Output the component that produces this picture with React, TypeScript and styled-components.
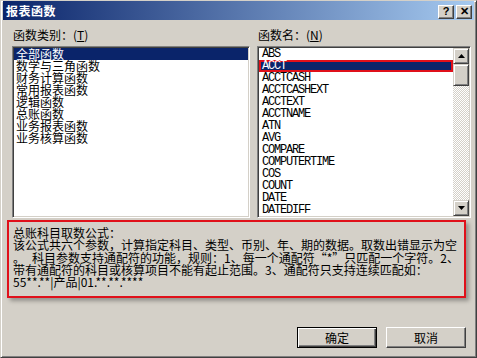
import React from "react";
import styled, { createGlobalStyle } from "styled-components";

const GlobalStyle = createGlobalStyle`
  html, body { margin: 0; padding: 0; background: #d4d0c8; }
  body { font-family: "Noto Sans CJK SC", "Liberation Sans", sans-serif; font-size: 12px; color: #000; }
  * { box-sizing: border-box; }
`;

const Window = styled.div`
  width: 477px;
  height: 358px;
  background: #d4d0c8;
  border: 1px solid;
  border-color: #d4d0c8 #404040 #404040 #d4d0c8;
  box-shadow: inset 1px 1px #ffffff, inset -1px -1px #808080;
  padding: 0 2px 2px 2px;
  display: flex;
  flex-direction: column;
`;

const TitleBar = styled.div`
  height: 19px;
  display: flex;
  align-items: center;
  padding: 0 2px 0 2px;
  background: linear-gradient(to right, #0a246a, #a6caf0);
`;

const TitleText = styled.div`
  flex: 1;
  color: #fff;
  font-weight: 700;
  font-size: 12px;
  line-height: 12px;
  padding-left: 1px;
  letter-spacing: 0.5px;
`;

const CaptionButtons = styled.div`
  display: flex;
  gap: 2px;
  margin-top: 2px;
`;

const CaptionButton = styled.div`
  width: 16px;
  height: 14px;
  background: #d4d0c8;
  border: 1px solid;
  border-color: #ffffff #404040 #404040 #ffffff;
  box-shadow: inset -1px -1px #808080;
  display: flex;
  align-items: center;
  justify-content: center;
  font-family: "Liberation Sans", sans-serif;
  font-weight: 700;
  font-size: 11px;
  line-height: 11px;
`;

const Body = styled.div`
  flex: 1;
  display: flex;
  flex-direction: column;
  padding: 9px 3px 0 4px;
`;

const Columns = styled.div`
  display: grid;
  grid-template-columns: 238px 214px;
  column-gap: 7px;
  margin-left: 5px;
`;

const Column = styled.div`
  display: flex;
  flex-direction: column;
`;

const Label = styled.div<{ $indent?: number }>`
  height: 12px;
  line-height: 12px;
  margin-bottom: 5px;
  padding-left: ${(p) => p.$indent ?? 1}px;
  white-space: nowrap;
  u { text-decoration: underline; text-underline-offset: 1px; }
`;

const ListBox = styled.div`
  height: 172px;
  background: #fff;
  border: 1px solid;
  border-color: #808080 #ffffff #ffffff #808080;
  box-shadow: inset 1px 1px #404040, inset -1px -1px #d4d0c8;
  padding: 1px;
  display: flex;
  overflow: hidden;
`;

const Items = styled.div`
  flex: 1;
  display: flex;
  flex-direction: column;
`;

const CnRow = styled.div<{ $selected?: boolean }>`
  height: 12px;
  line-height: 12px;
  padding-left: 2px;
  white-space: nowrap;
  background: ${(p) => (p.$selected ? "#0a246a" : "transparent")};
  color: ${(p) => (p.$selected ? "#fff" : "#000")};
`;

const FnRow = styled.div<{ $selected?: boolean }>`
  height: 12px;
  line-height: 12px;
  padding-left: 3px;
  white-space: nowrap;
  font-family: "Liberation Mono", monospace;
  font-size: 12px;
  letter-spacing: -1.2px;
  background: ${(p) => (p.$selected ? "#0a246a" : "transparent")};
  color: ${(p) => (p.$selected ? "#fff" : "#000")};
  box-shadow: ${(p) => (p.$selected ? "inset 0 0 0 2px #e0101a" : "none")};
`;

const ScrollBar = styled.div`
  width: 16px;
  display: flex;
  flex-direction: column;
`;

const ScrollButton = styled.div<{ $h?: number }>`
  width: 16px;
  height: ${(p) => p.$h ?? 16}px;
  background: #d4d0c8;
  border: 1px solid;
  border-color: #d4d0c8 #404040 #404040 #d4d0c8;
  box-shadow: inset 1px 1px #ffffff, inset -1px -1px #808080;
  display: flex;
  align-items: center;
  justify-content: center;
`;

const Track = styled.div`
  flex: 1;
  background: repeating-conic-gradient(#ffffff 0 25%, #d4d0c8 0 50%) 0 0 / 2px 2px;
`;

const DescBox = styled.div`
  margin-top: 2px;
  width: 459px;
  height: 78px;
  border: 2px solid #e0101a;
  box-shadow: 3px 3px 4px rgba(0, 0, 0, 0.3);
  padding: 5px 0 0 4px;
  display: flex;
  flex-direction: column;
`;

const DescLine = styled.div`
  height: 12.25px;
  line-height: 12.25px;
  white-space: nowrap;
`;

const Gap = styled.span`
  display: inline-block;
  width: 7px;
`;

const Footer = styled.div`
  display: flex;
  justify-content: flex-end;
  gap: 9px;
  margin-top: 29px;
  padding-right: 5px;
`;

const Button = styled.div<{ $default?: boolean }>`
  width: 80px;
  height: 21px;
  background: #d4d0c8;
  display: flex;
  align-items: center;
  justify-content: center;
  font-size: 12px;
  border: 1px solid;
  border-color: ${(p) => (p.$default ? "#000" : "#fff #404040 #404040 #fff")};
  box-shadow: ${(p) =>
    p.$default
      ? "inset 1px 1px #fff, inset -1px -1px #404040, inset -2px -2px #808080"
      : "inset -1px -1px #808080"};
`;

const UpArrow = () => (
  <svg width="7" height="4" viewBox="0 0 7 4">
    <path d="M3.5 0 L7 4 L0 4 Z" fill="#000" />
  </svg>
);
const DownArrow = () => (
  <svg width="7" height="4" viewBox="0 0 7 4">
    <path d="M0 0 L7 0 L3.5 4 Z" fill="#000" />
  </svg>
);

const categories = ["全部函数", "数学与三角函数", "财务计算函数", "常用报表函数", "逻辑函数", "总账函数", "业务报表函数", "业务核算函数"];
const functions = ["ABS", "ACCT", "ACCTCASH", "ACCTCASHEXT", "ACCTEXT", "ACCTNAME", "ATN", "AVG", "COMPARE", "COMPUTERTIME", "COS", "COUNT", "DATE", "DATEDIFF"];

export default function App() {
  return (
    <>
      <GlobalStyle />
      <Window>
        <TitleBar>
          <TitleText>报表函数</TitleText>
          <CaptionButtons>
            <CaptionButton>?</CaptionButton>
            <CaptionButton>✕</CaptionButton>
          </CaptionButtons>
        </TitleBar>
        <Body>
          <Columns>
            <Column>
              <Label>函数类别：(<u>T</u>)</Label>
              <ListBox>
                <Items>
                  {categories.map((c, i) => (
                    <CnRow key={c} $selected={i === 0}>{c}</CnRow>
                  ))}
                </Items>
              </ListBox>
            </Column>
            <Column>
              <Label>函数名：(<u>N</u>)</Label>
              <ListBox>
                <Items>
                  {functions.map((f, i) => (
                    <FnRow key={f} $selected={i === 1}>{f}</FnRow>
                  ))}
                </Items>
                <ScrollBar>
                  <ScrollButton><UpArrow /></ScrollButton>
                  <ScrollButton $h={22} />
                  <Track />
                  <ScrollButton><DownArrow /></ScrollButton>
                </ScrollBar>
              </ListBox>
            </Column>
          </Columns>
          <DescBox>
            <DescLine>总账科目取数公式：</DescLine>
            <DescLine>该公式共六个参数，计算指定科目、类型、币别、年、期的数据。取数出错显示为空</DescLine>
            <DescLine>。<Gap />科目参数支持通配符的功能，规则：1、每一个通配符“*”只匹配一个字符。2、</DescLine>
            <DescLine>带有通配符的科目或核算项目不能有起止范围。3、通配符只支持连续匹配如：</DescLine>
            <DescLine>55**.**|产品|01.**.**.****</DescLine>
          </DescBox>
          <Footer>
            <Button $default>确定</Button>
            <Button>取消</Button>
          </Footer>
        </Body>
      </Window>
    </>
  );
}
